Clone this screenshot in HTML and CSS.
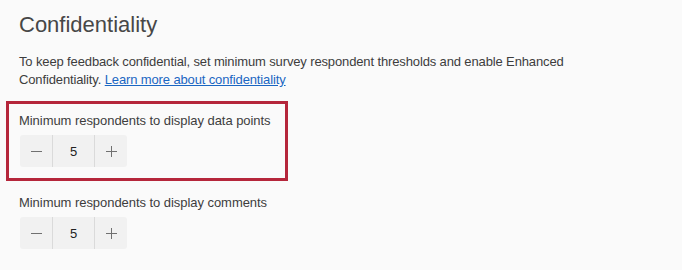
FILE: index.html
```html
<!DOCTYPE html>
<html lang="en">
<head>
    <meta charset="UTF-8">
    <meta name="viewport" content="width=device-width, initial-scale=1.0">
    <title>Confidentiality</title>
    <link rel="stylesheet" href="styles.css">
</head>
<body>
    <div class="section">
        <h1>Confidentiality</h1>
        <p class="intro">
            To keep feedback confidential, set minimum survey respondent thresholds and enable Enhanced
            Confidentiality. <a href="#">Learn more about confidentiality</a>
        </p>

        <!-- highlighted field -->
        <div class="field highlight">
            <label class="field-label">Minimum respondents to display data points</label>
            <div class="stepper">
                <button class="step-btn" type="button" aria-label="Decrease">
                    <svg width="11" height="11" viewBox="0 0 11 11"><line x1="0" y1="5.5" x2="11" y2="5.5"/></svg>
                </button>
                <span class="step-value">5</span>
                <button class="step-btn" type="button" aria-label="Increase">
                    <svg width="11" height="11" viewBox="0 0 11 11"><line x1="0" y1="5.5" x2="11" y2="5.5"/><line x1="5.5" y1="0" x2="5.5" y2="11"/></svg>
                </button>
            </div>
        </div>

        <div class="field">
            <label class="field-label">Minimum respondents to display comments</label>
            <div class="stepper">
                <button class="step-btn" type="button" aria-label="Decrease">
                    <svg width="11" height="11" viewBox="0 0 11 11"><line x1="0" y1="5.5" x2="11" y2="5.5"/></svg>
                </button>
                <span class="step-value">5</span>
                <button class="step-btn" type="button" aria-label="Increase">
                    <svg width="11" height="11" viewBox="0 0 11 11"><line x1="0" y1="5.5" x2="11" y2="5.5"/><line x1="5.5" y1="0" x2="5.5" y2="11"/></svg>
                </button>
            </div>
        </div>
    </div>
</body>
</html>
```

FILE: styles.css
```css
body {
    margin: 0;
    padding: 0;
    background-color: #fafafa;
    color: #3d3d3d;
    font-family: "Liberation Sans", Arial, sans-serif;
}

.section {
    padding: 11px 19px 0;
}

h1 {
    margin: 0;
    font-size: 22px;
    line-height: 28px;
    font-weight: normal;
    color: #474747;
}

.intro {
    max-width: 580px;
    margin: 14px 0 0;
    font-size: 13px;
    line-height: 18px;
    letter-spacing: -0.13px;
}

.intro a {
    color: #1a66c2;
    text-decoration: underline;
}

.field {
    margin-top: 13px;
}

.field.highlight {
    margin: 12px 0 0 -13px;
    width: 256px;
    padding: 8px 10px 11px;
    border: 3px solid #b5263b;
}

.field-label {
    display: block;
    font-size: 13px;
    line-height: 18px;
    letter-spacing: -0.05px;
    margin-bottom: 5px;
}

.stepper {
    display: inline-flex;
    height: 32px;
    margin-left: 1px;
    background-color: #f1f1f1;
    border-radius: 3px;
}

.step-btn {
    width: 32px;
    height: 32px;
    padding: 0;
    border: none;
    background: none;
    display: flex;
    align-items: center;
    justify-content: center;
    cursor: pointer;
}

.step-btn svg line {
    stroke: #707070;
    stroke-width: 1;
}

.step-value {
    width: 41px;
    border-left: 1px solid #dadada;
    border-right: 1px solid #dadada;
    display: flex;
    align-items: center;
    justify-content: center;
    font-size: 13px;
    color: #222222;
}
```
